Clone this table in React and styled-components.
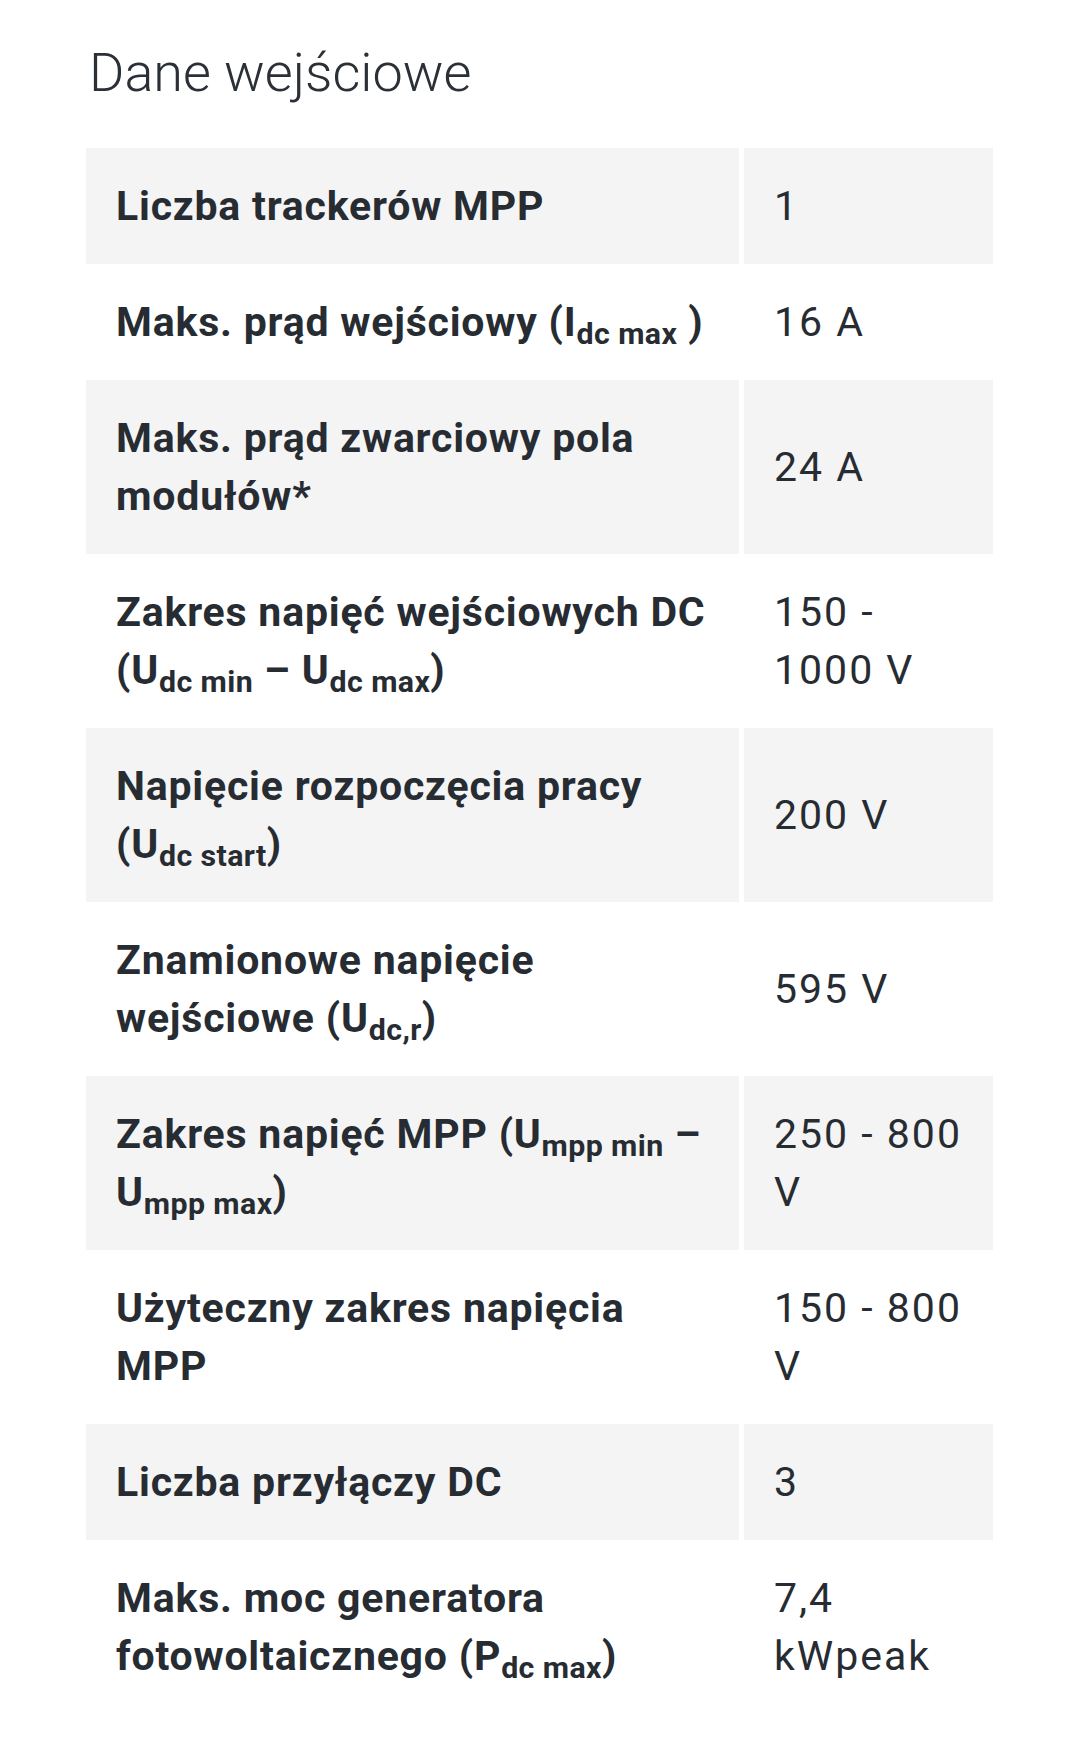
import React from "react";
import styled, { createGlobalStyle } from "styled-components";

const Global = createGlobalStyle`
  html, body { margin: 0; padding: 0; background: #ffffff; }
  body { font-family: Roboto, "Liberation Sans", Arial, sans-serif; color: #272c33; }
`;

const Page = styled.div`
  padding: 37px 80px 40px 86px;
`;

const Heading = styled.h2`
  margin: 0 0 39px 3px;
  font-size: 54px;
  line-height: 72px;
  font-weight: 300;
  color: #2b3037;
`;

const Table = styled.div`
  display: flex;
  flex-direction: column;
  width: 907px;
`;

const Row = styled.div`
  display: grid;
  grid-template-columns: 653px 249px;
  column-gap: 5px;
`;

const Cell = styled.div`
  background: ${(p) => (p.$shaded ? "#f4f4f4" : "#ffffff")};
  padding: 29px 18px 29px 30px;
  font-size: 41px;
  line-height: 58px;
  display: flex;
  align-items: center;
`;

const Label = styled(Cell)`
  font-weight: 700;
  letter-spacing: 0.8px;
`;

const Value = styled(Cell)`
  font-weight: 400;
  letter-spacing: 2px;
`;

const Sub = styled.sub`
  font-size: 0.74em;
  line-height: 0;
  vertical-align: -0.26em;
  letter-spacing: 0.4px;
`;

const Group = styled.span`
  white-space: nowrap;
`;

const rows = [
  { label: <>Liczba trackerów MPP</>, value: "1" },
  { label: <>Maks. prąd wejściowy <Group>(I<Sub>dc max</Sub> )</Group></>, value: "16 A" },
  { label: <>Maks. prąd zwarciowy pola modułów*</>, value: "24 A" },
  { label: <>Zakres napięć wejściowych DC <Group>(U<Sub>dc min</Sub> – U<Sub>dc max</Sub>)</Group></>, value: "150 - 1000 V" },
  { label: <>Napięcie rozpoczęcia pracy <Group>(U<Sub>dc start</Sub>)</Group></>, value: "200 V" },
  { label: <>Znamionowe napięcie wejściowe <Group>(U<Sub>dc,r</Sub>)</Group></>, value: "595 V" },
  { label: <>Zakres napięć MPP <Group>(U<Sub>mpp min</Sub> –</Group> <Group>U<Sub>mpp max</Sub>)</Group></>, value: "250 - 800 V" },
  { label: <>Użyteczny zakres napięcia MPP</>, value: "150 - 800 V" },
  { label: <>Liczba przyłączy DC</>, value: "3" },
  { label: <>Maks. moc generatora fotowoltaicznego <Group>(P<Sub>dc max</Sub>)</Group></>, value: "7,4 kWpeak" },
];

export default function App() {
  return (
    <Page>
      <Global />
      <Heading>Dane wejściowe</Heading>
      <Table>
        {rows.map((r, i) => (
          <Row key={i}>
            <Label $shaded={i % 2 === 0}><span>{r.label}</span></Label>
            <Value $shaded={i % 2 === 0}><span>{r.value}</span></Value>
          </Row>
        ))}
      </Table>
    </Page>
  );
}
